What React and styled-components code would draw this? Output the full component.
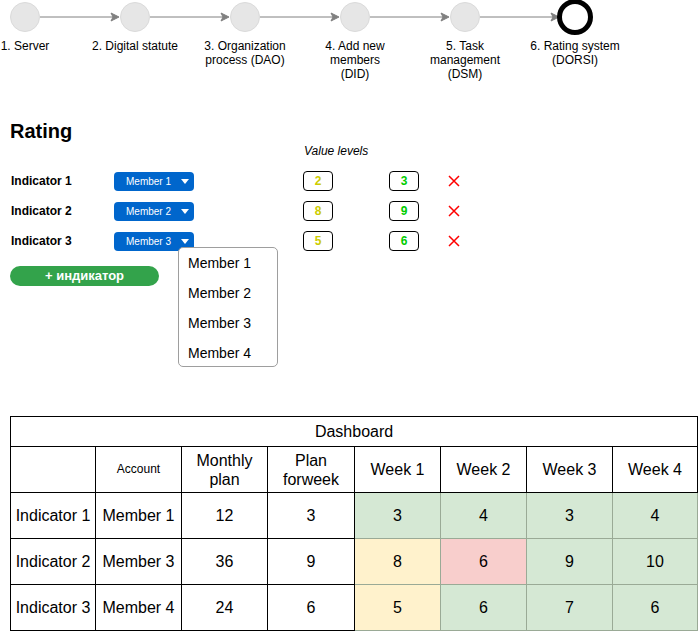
import styled, { createGlobalStyle } from "styled-components"

const Global = createGlobalStyle`
  html, body {
    margin: 0;
    padding: 0;
    background: #ffffff;
    overflow: hidden;
  }
  body {
    font-family: "Liberation Sans", Arial, Helvetica, sans-serif;
    color: #000000;
  }
`;

const Page = styled.div`
  width: 698px;
  height: 631px;
  overflow: hidden;
`;

const CircleRow = styled.div`
  display: flex;
  align-items: center;
  height: 34px;
  padding-left: 10px;
`;

const Circle = styled.div`
  flex: none;
  box-sizing: border-box;
  width: ${props => (props.active ? "36px" : "30px")};
  height: ${props => (props.active ? "36px" : "30px")};
  margin: ${props => (props.active ? "0 -3px" : "0")};
  border-radius: 50%;
  background: ${props => (props.active ? "#ffffff" : "#e6e6e6")};
  border: ${props => (props.active ? "5px solid #000000" : "1px solid #dadada")};
`;

const ArrowSvg = styled.svg`
  flex: none;
  display: block;
`;

const LabelRow = styled.div`
  display: grid;
  grid-template-columns: repeat(6, 110px);
  margin-top: 5px;
  margin-left: -30px;
`;

const StepLabel = styled.div`
  font-size: 12px;
  line-height: 14px;
  text-align: center;
  color: #000000;
`;

const Heading = styled.h1`
  margin: 38px 0 0 10px;
  font-size: 20px;
  line-height: 24px;
  font-weight: 700;
`;

const ValueLevels = styled.div`
  margin: 1px 0 0 304px;
  font-size: 12px;
  line-height: 14px;
  font-style: italic;
`;

const Rows = styled.div`
  margin-top: 8px;
  margin-left: 11px;
`;

const Row = styled.div`
  display: flex;
  align-items: center;
  height: 30px;
`;

const RowLabel = styled.div`
  width: 103px;
  font-size: 12px;
  font-weight: 700;
`;

const DropWrap = styled.div`
  position: relative;
`;

const DropButton = styled.div`
  box-sizing: border-box;
  display: flex;
  align-items: center;
  width: 80px;
  height: 19px;
  padding-left: 12px;
  border-radius: 4px;
  background: #0066cc;
  color: #ffffff;
  font-size: 10px;
`;

const Caret = styled.span`
  margin-left: 10px;
  width: 0;
  height: 0;
  border-left: 4px solid transparent;
  border-right: 4px solid transparent;
  border-top: 5px solid #ffffff;
`;

const Menu = styled.div`
  position: absolute;
  left: 64px;
  top: 15px;
  z-index: 2;
  box-sizing: border-box;
  width: 100px;
  height: 120px;
  background: #ffffff;
  border: 1px solid #9e9e9e;
  border-radius: 5px;
`;

const MenuItem = styled.div`
  height: 30px;
  line-height: 30px;
  padding-left: 9px;
  font-size: 14px;
`;

const ValueBox = styled.div`
  box-sizing: border-box;
  width: 30px;
  height: 20px;
  margin-left: ${props => props.gap}px;
  border: 1px solid #000000;
  border-radius: 4px;
  display: flex;
  align-items: center;
  justify-content: center;
  font-size: 12px;
  font-weight: 700;
  color: ${props => props.color};
`;

const Cross = styled.svg`
  margin-left: 29px;
  display: block;
`;

const AddButton = styled.div`
  margin: 10px 0 0 10px;
  width: 149px;
  height: 20px;
  border-radius: 10px;
  background: #33a34b;
  color: #ffffff;
  font-size: 13px;
  font-weight: 700;
  line-height: 19px;
  text-align: center;
`;

const Table = styled.table`
  margin: 130px 0 0 10px;
  border-collapse: collapse;
  table-layout: fixed;
  width: 687px;
  font-size: 16px;
`;

const Cell = styled.td`
  box-sizing: border-box;
  padding: 0;
  border: 1px solid ${props => (props.bg ? "#9aaa96" : "#000000")};
  background: ${props => props.bg || "#ffffff"};
  text-align: center;
  vertical-align: middle;
  font-size: ${props => (props.small ? "12px" : "16px")};
  line-height: 19px;
`;

const TitleRow = styled.tr`
  height: 30px;
`;

const HeadRow = styled.tr`
  height: 46px;
`;

const DataRow = styled.tr`
  height: 46px;
`;

const GREEN = "#d5e8d4";
const YELLOW = "#fff2cc";
const RED = "#f8cecc";

const steps = [
  ["1. Server"],
  ["2. Digital statute"],
  ["3. Organization", "process (DAO)"],
  ["4. Add new", "members", "(DID)"],
  ["5. Task", "management", "(DSM)"],
  ["6. Rating system", "(DORSI)"],
];

const ratings = [
  { name: "Indicator 1", member: "Member 1", low: 2, high: 3 },
  { name: "Indicator 2", member: "Member 2", low: 8, high: 9 },
  { name: "Indicator 3", member: "Member 3", low: 5, high: 6, open: true },
];

const dashboard = [
  { name: "Indicator 1", member: "Member 1", month: 12, week: 3, weeks: [[3, GREEN], [4, GREEN], [3, GREEN], [4, GREEN]] },
  { name: "Indicator 2", member: "Member 3", month: 36, week: 9, weeks: [[8, YELLOW], [6, RED], [9, GREEN], [10, GREEN]] },
  { name: "Indicator 3", member: "Member 4", month: 24, week: 6, weeks: [[5, YELLOW], [6, GREEN], [7, GREEN], [6, GREEN]] },
];

const colWidths = [85, 86, 86, 87, 86, 86, 86, 85];

function Arrow() {
  return (
    <ArrowSvg width="80" height="12" viewBox="0 0 80 12">
      <line x1="0" y1="6" x2="74" y2="6" stroke="#808080" strokeWidth="1" />
      <polygon points="79,6 71,2 73,6 71,10" fill="#808080" stroke="#808080" strokeWidth="1" />
    </ArrowSvg>
  );
}

export default function App() {
  return (
    <Page>
      <Global />
      <CircleRow>
        {steps.map((s, i) => [
          i > 0 ? <Arrow key={"a" + i} /> : null,
          <Circle key={"c" + i} active={i === steps.length - 1} />,
        ])}
      </CircleRow>
      <LabelRow>
        {steps.map((lines, i) => (
          <StepLabel key={i}>
            {lines.map((l, j) => (
              <div key={j}>{l}</div>
            ))}
          </StepLabel>
        ))}
      </LabelRow>

      <Heading>Rating</Heading>
      <ValueLevels>Value levels</ValueLevels>
      <Rows>
        {ratings.map(r => (
          <Row key={r.name}>
            <RowLabel>{r.name}</RowLabel>
            <DropWrap>
              <DropButton>
                {r.member}
                <Caret />
              </DropButton>
              {r.open && (
                <Menu>
                  {["Member 1", "Member 2", "Member 3", "Member 4"].map(m => (
                    <MenuItem key={m}>{m}</MenuItem>
                  ))}
                </Menu>
              )}
            </DropWrap>
            <ValueBox gap={109} color="#cccc00">{r.low}</ValueBox>
            <ValueBox gap={56} color="#00cc00">{r.high}</ValueBox>
            <Cross width="12" height="12" viewBox="0 0 12 12">
              <path d="M1 1 L11 11 M11 1 L1 11" stroke="#ff0000" strokeWidth="1.5" fill="none" />
            </Cross>
          </Row>
        ))}
      </Rows>
      <AddButton>+ индикатор</AddButton>

      <Table>
        <colgroup>
          {colWidths.map((w, i) => (
            <col key={i} style={{ width: w }} />
          ))}
        </colgroup>
        <tbody>
          <TitleRow>
            <Cell colSpan={8}>Dashboard</Cell>
          </TitleRow>
          <HeadRow>
            <Cell />
            <Cell small>Account</Cell>
            <Cell>Monthly<br />plan</Cell>
            <Cell>Plan<br />forweek</Cell>
            <Cell>Week 1</Cell>
            <Cell>Week 2</Cell>
            <Cell>Week 3</Cell>
            <Cell>Week 4</Cell>
          </HeadRow>
          {dashboard.map(d => (
            <DataRow key={d.name}>
              <Cell>{d.name}</Cell>
              <Cell>{d.member}</Cell>
              <Cell>{d.month}</Cell>
              <Cell>{d.week}</Cell>
              {d.weeks.map(([v, c], i) => (
                <Cell key={i} bg={c}>{v}</Cell>
              ))}
            </DataRow>
          ))}
        </tbody>
      </Table>
    </Page>
  );
}
